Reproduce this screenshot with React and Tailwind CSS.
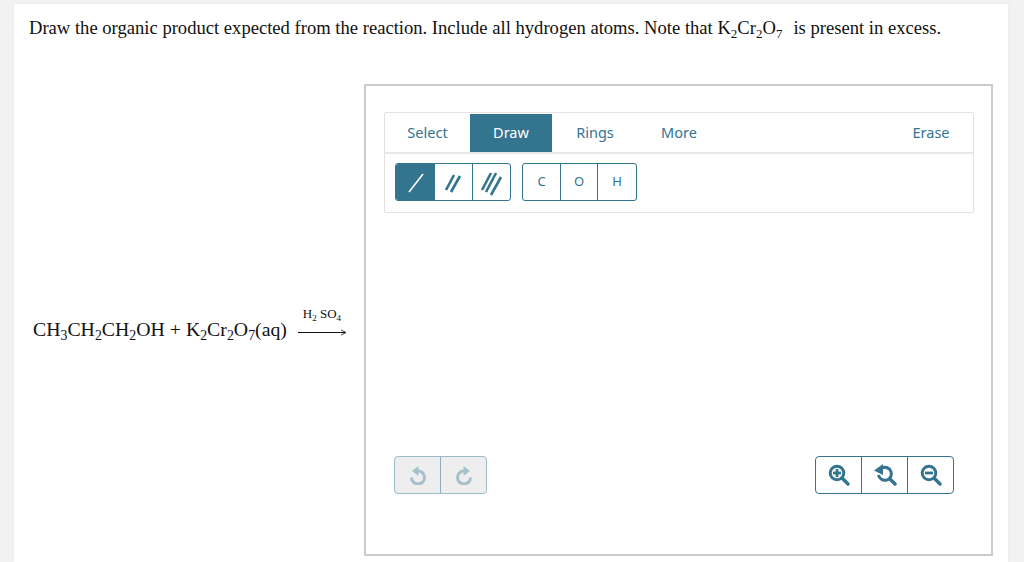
import React from "react";

const teal = "#33748f";

const Sub = ({ children, className = "" }) => (
    <sub className={`text-[0.7em] leading-none align-baseline relative top-[0.28em] ${className}`}>{children}</sub>
);

const TabButton = ({ label, width, active }) => (
    <div
        className={`h-[38px] flex items-center justify-center text-[14.5px] ${width} ${
            active ? "bg-[#33748f] text-white" : "text-[#33748f]"
        }`}
    >
        {label}
    </div>
);

const bondLines = {
    1: [[5, 22, 19, 4]],
    2: [
        [4, 20, 12, 5],
        [9, 22, 18, 6],
    ],
    3: [
        [2, 20, 11, 3],
        [6, 22, 16, 3],
        [11, 25, 21, 7],
    ],
};

const BondIcon = ({ count, active }) => (
    <svg width="24" height="24" viewBox="0 0 24 24" className="overflow-visible">
        {bondLines[count].map(([x1, y1, x2, y2]) => (
            <line
                key={x1}
                x1={x1}
                y1={y1}
                x2={x2}
                y2={y2}
                stroke={active ? "#ffffff" : teal}
                strokeWidth={active ? 1.6 : 2.6}
            />
        ))}
    </svg>
);

const UndoIcon = ({ flip, color }) => (
    <svg width="16" height="19" viewBox="0 0 16 19" className={flip ? "-scale-x-100" : ""}>
        <path d="M8 5 A6.5 6.5 0 1 1 1.5 11.5" fill="none" stroke={color} strokeWidth="3" />
        <path d="M8.5 0 L8.5 10 L2 5 Z" fill={color} />
    </svg>
);

const ZoomIcon = ({ type }) => (
    <svg width="24" height="24" viewBox="0 0 24 24">
        {type === "reset" ? (
            <>
                <path d="M9 5 A6.5 6.5 0 1 1 5.5 12" fill="none" stroke={teal} strokeWidth="3" />
                <path d="M10 1 L10 12 L1 7.5 Z" fill={teal} />
                <line x1="17" y1="16" x2="22" y2="21" stroke={teal} strokeWidth="3.4" strokeLinecap="round" />
            </>
        ) : (
            <>
                <circle cx="10" cy="10" r="6.8" fill="none" stroke={teal} strokeWidth="3" />
                <line x1="15.5" y1="15.5" x2="21" y2="21" stroke={teal} strokeWidth="3.4" strokeLinecap="round" />
                <line x1="6" y1="10" x2="14" y2="10" stroke={teal} strokeWidth="2.8" />
                {type === "in" && <line x1="10" y1="6" x2="10" y2="14" stroke={teal} strokeWidth="2.8" />}
            </>
        )}
    </svg>
);

const App = () => {
    return (
        <div className="w-[1024px] h-[562px] overflow-hidden bg-[#f2f2f2] pt-[4px] pl-[14px]">
            <div className="w-[994px] h-[558px] bg-white pl-[15px] pt-[13px] shadow-[0_0_2px_#e4e4e4] font-['Liberation_Serif',serif] text-[#111]">
                <p className="text-[18.6px] leading-[22px] h-[67px] whitespace-nowrap">
                    Draw the organic product expected from the reaction. Include all hydrogen atoms. Note that K
                    <Sub>2</Sub>Cr<Sub>2</Sub>O<Sub>7</Sub>
                    <span className="ml-[11px]">is present in excess.</span>
                </p>

                <div className="flex">
                    <div className="w-[335px] pl-[4px] pt-[220px] flex items-start">
                        <div className="text-[19.8px] leading-[22px] whitespace-nowrap pt-[14px]">
                            CH<Sub>3</Sub>CH<Sub>2</Sub>CH<Sub>2</Sub>OH + K<Sub>2</Sub>Cr<Sub>2</Sub>O<Sub>7</Sub>(aq)
                        </div>
                        <div className="ml-[11px] w-[48px] flex flex-col items-center">
                            <div className="text-[13px] leading-[14px] h-[24px] pt-[3px] whitespace-nowrap">
                                H<Sub>2</Sub> SO<Sub>4</Sub>
                            </div>
                            <svg width="48" height="7" viewBox="0 0 48 7" className="mt-[1px]">
                                <line x1="0" y1="3.5" x2="47" y2="3.5" stroke="#111" strokeWidth="1" />
                                <path d="M43 1 L48 3.5 L43 6" fill="none" stroke="#111" strokeWidth="0.8" />
                            </svg>
                        </div>
                    </div>

                    <div className="w-[629px] h-[472px] border-[2px] border-[#cccccc] px-[18px] pt-[26px] font-['Noto_Sans',sans-serif]">
                        <div className="w-[590px] h-[101px] border border-[#e2e2e2] rounded-[2px]">
                            <div className="flex h-[38px] pt-[1px] box-content border-b-[2px] border-[#e8e8e8]">
                                <TabButton label="Select" width="w-[85px]" />
                                <TabButton label="Draw" width="w-[82px]" active />
                                <TabButton label="Rings" width="w-[86px]" />
                                <TabButton label="More" width="w-[82px]" />
                                <div className="flex-1" />
                                <TabButton label="Erase" width="w-[84px]" />
                            </div>
                            <div className="flex pt-[9px] pl-[10px] gap-[11px]">
                                <div className="flex h-[38px] rounded-[3px] border border-[#33748f] overflow-hidden">
                                    <div className="w-[39px] bg-[#33748f] flex items-center justify-center">
                                        <BondIcon count={1} active />
                                    </div>
                                    <div className="w-[38px] border-r border-[#33748f] flex items-center justify-center">
                                        <BondIcon count={2} />
                                    </div>
                                    <div className="w-[37px] flex items-center justify-center">
                                        <BondIcon count={3} />
                                    </div>
                                </div>
                                <div className="flex h-[38px] rounded-[3px] border border-[#33748f] text-[13px] text-[#33748f]">
                                    <div className="w-[38px] border-r border-[#33748f] flex items-center justify-center">C</div>
                                    <div className="w-[37px] border-r border-[#33748f] flex items-center justify-center">O</div>
                                    <div className="w-[38px] flex items-center justify-center">H</div>
                                </div>
                            </div>
                        </div>

                        <div className="flex justify-between items-start w-[590px] mt-[243px] pl-[10px]">
                            <div className="flex h-[38px] rounded-[4px] border border-[#9dbcc9] bg-[#eeeeee]">
                                <div className="w-[46px] border-r border-[#8db0bf] flex items-center justify-center">
                                    <UndoIcon color="#a6c1cc" />
                                </div>
                                <div className="w-[45px] flex items-center justify-center">
                                    <UndoIcon flip color="#a6c1cc" />
                                </div>
                            </div>
                            <div className="flex h-[38px] mr-[20px] rounded-[4px] border border-[#33748f] bg-white">
                                <div className="w-[46px] border-r border-[#33748f] flex items-center justify-center">
                                    <ZoomIcon type="in" />
                                </div>
                                <div className="w-[46px] border-r border-[#33748f] flex items-center justify-center">
                                    <ZoomIcon type="reset" />
                                </div>
                                <div className="w-[45px] flex items-center justify-center">
                                    <ZoomIcon type="out" />
                                </div>
                            </div>
                        </div>
                    </div>
                </div>
            </div>
        </div>
    );
};

export default App;
